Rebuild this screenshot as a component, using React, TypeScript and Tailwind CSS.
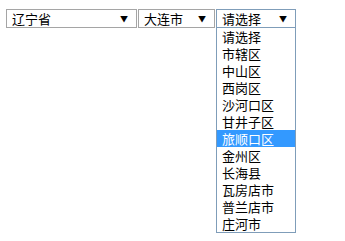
import React from 'react';

const districts = [
  '请选择',
  '市辖区',
  '中山区',
  '西岗区',
  '沙河口区',
  '甘井子区',
  '旅顺口区',
  '金州区',
  '长海县',
  '瓦房店市',
  '普兰店市',
  '庄河市',
];

function Select({ label, width, active }: { label: string; width: string; active?: boolean }) {
  return (
    <div
      className={`${width} h-[19px] flex items-center justify-between pl-[5px] pr-[8px] bg-white border ${
        active ? 'border-[#7f9db9]' : 'border-[#a5a5a5]'
      }`}
    >
      <span className="text-[13px] leading-[17px] text-black">{label}</span>
      <span className="text-[8px] leading-[17px] text-black">▼</span>
    </div>
  );
}

export default function App() {
  return (
    <div
      className="w-[345px] h-[241px] bg-white pt-[9px] pl-[6px]"
      style={{ fontFamily: '"Noto Sans CJK SC", "Liberation Sans", sans-serif' }}
    >
      <div className="flex gap-[1px]">
        <Select label="辽宁省" width="w-[131px]" />
        <Select label="大连市" width="w-[77px]" />
        <div className="flex flex-col">
          <Select label="请选择" width="w-[80px]" active />
          <div className="w-[80px] border border-t-0 border-[#7f9db9] bg-white">
            {districts.map((d) => (
              <div
                key={d}
                className={`h-[17px] pl-[5px] text-[13px] leading-[17px] ${
                  d === '旅顺口区' ? 'bg-[#3399ff] text-white' : 'text-black'
                }`}
              >
                {d}
              </div>
            ))}
          </div>
        </div>
      </div>
    </div>
  );
}
